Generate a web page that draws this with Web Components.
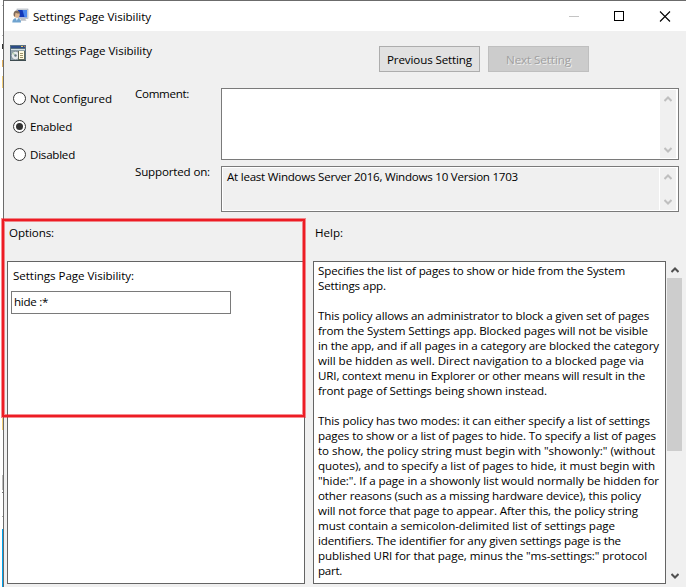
<!DOCTYPE html>
<html lang="en">
<head>
<meta charset="utf-8">
<title>Settings Page Visibility</title>
<style>
html,body{margin:0;height:100%;overflow:hidden;background:#fff}
body{font:11.6px/15px "Open Sans","Noto Sans",sans-serif;color:#000}
</style>
</head>
<body>
<policy-dialog></policy-dialog>
<script>
const define = (name, html, setup) => {
  const t = document.createElement('template');
  t.innerHTML = html;
  customElements.define(name, class extends HTMLElement {
    constructor() {
      super();
      this.attachShadow({mode: 'open'}).append(t.content.cloneNode(true));
    }
    connectedCallback() { if (setup) setup(this, this.shadowRoot); }
  });
};

// A single line of text tracked to a given width.
define('text-line', `<style>
:host{display:block;height:15px;line-height:15px;white-space:pre}
span{display:inline-block}</style><span><slot></slot></span>`, (el, root) => {
  const s = root.querySelector('span'), w = parseFloat(el.getAttribute('w'));
  if (!w) return;
  const n = el.textContent.length;
  s.style.letterSpacing = ((w - s.getBoundingClientRect().width) / n).toFixed(4) + 'px';
});

define('user-monitor-icon', `<style>:host{display:block;width:17px;height:16px}svg{display:block}</style>
<svg width="17" height="16" viewBox="0 0 17 16">
<rect x="5" y="1" width="11" height="9.5" fill="#d9dde2" stroke="#9ea7b3" stroke-width=".6"/>
<rect x="6" y="2" width="9" height="7.2" fill="#1238b8"/><path d="M10.5 2H15v7.2h-2.5z" fill="#4a86ee"/>
<path d="M9 10.5h4l1.500 2.200H8z" fill="#b9bec6"/>
<path d="M.3 14.500c0-3 1.700-4.500 4.200-4.500s4.600 1.500 4.600 4.500z" fill="#6fa3cf"/>
<path d="M3.500 10l1.300 2.700 1.500-2.700z" fill="#eef4fa"/>
<circle cx="4.800" cy="6.700" r="3" fill="#dcb48e"/>
<path d="M1.600 7.500c-.5-3.300 1.200-5 3.300-4.900 2 .1 3 1.300 2.900 2.900-2 .4-3.500-.3-4.200-.8C3.300 6 2.800 8 2.900 9z" fill="#7d6a5c"/>
</svg>`);

define('policy-icon', `<style>:host{display:block;width:16px;height:16px}svg{display:block}</style>
<svg width="16" height="16" viewBox="0 0 16 16" shape-rendering="crispEdges">
<rect width="16" height="16" fill="#587181"/><rect x="1" y="1" width="14" height="2" fill="#2b4b86"/>
<rect x="11" y="1" width="2" height="1" fill="#e8c75d"/><rect x="14" y="1" width="1" height="1" fill="#d46a4a"/>
<rect x="1" y="4" width="14" height="11" fill="#8fa2a9"/><rect x="1" y="4" width="14" height="1" fill="#d4dee2"/>
<g shape-rendering="auto"><circle cx="5.500" cy="10.500" r="4.200" fill="#e6ebed" stroke="#72838b" stroke-width=".7"/>
<path d="M5.500 10.500L2 9 3.600 7z" fill="#b9d4b4"/><circle cx="5.500" cy="10.500" r="1.200" fill="#5f747e"/></g>
<rect x="8" y="6" width="7" height="9" fill="#5d6657"/><rect x="9" y="6" width="5" height="8" fill="#fffbe0"/>
<path d="M10 8h3v1h-3zM10 10h3v1h-3zM10 12h3v1h-3z" fill="#9c936b"/>
<rect y="15" width="16" height="1" fill="#3d4b50"/>
</svg>`);

define('title-bar', `<style>
:host{display:flex;height:30px;background:#fff;padding-left:8px;align-items:center}
user-monitor-icon{margin-right:4px}text-line{flex:1}
svg{display:block;margin-right:15px}
</style><user-monitor-icon></user-monitor-icon><text-line w="118">Settings Page Visibility</text-line>
<svg width="102" height="11" viewBox="0 0 102 11" fill="none">
<path d="M0 5.500h10" stroke="#c4c4c4"/><rect x="45.500" y=".5" width="9" height="9" stroke="#000"/>
<path d="M91 .5l10 10M101 .5l-10 10" stroke="#000" stroke-width="1.100"/></svg>`);

define('push-button', `<style>
:host{display:flex;box-sizing:border-box;width:101px;height:26px;border:1px solid #adadad;background:#e1e1e1;align-items:center;justify-content:center}
:host([disabled]){background:#ccc;border-color:#bfbfbf;color:#a0a0a0;text-shadow:1px 1px #efefef}
</style><slot></slot>`);

define('radio-option', `<style>
:host{display:flex;align-items:center;height:28px;gap:4px}
i{box-sizing:border-box;width:13px;height:13px;border:1px solid #333;border-radius:50%;background:#fff;display:grid;place-items:center}
:host([checked]) i::after{content:"";width:7px;height:7px;border-radius:50%;background:#333}
</style><i></i><slot></slot>`);

define('scroll-arrow', `<style>:host{display:block;width:8px;height:6px;color:#bfbfbf}:host([down]){transform:scaleY(-1)}svg{display:block}</style>
<svg width="8" height="6" viewBox="0 0 8 6"><path d="M.5 5L4 1.500 7.500 5" fill="none" stroke="currentColor" stroke-width="2"/></svg>`);

define('text-area', `<style>
:host{display:flex;box-sizing:border-box;border:1px solid #7a7a7a;background:#fff;padding:1px}
.t{flex:1;padding:1px 4px}
.s{width:16px;background:#f0f0f0;display:flex;flex-direction:column;justify-content:space-between;align-items:center;padding:6px 0 5px;box-sizing:border-box;margin-right:1px}
:host([readonly]) .t{background:#f0f0f0;margin-right:1px}
</style><div class="t"><slot></slot></div><div class="s"><scroll-arrow></scroll-arrow><scroll-arrow down></scroll-arrow></div>`);

define('field-box', `<style>
:host{display:flex;box-sizing:border-box;width:220px;height:23px;border:1px solid #7a7a7a;background:#fff;align-items:center;padding:0 3px 2px 2px}
</style><slot></slot>`);

define('panel-box', `<style>
:host{display:block;box-sizing:border-box;height:323px;border:1px solid #646464;background:#fff}
</style><slot></slot>`);

define('scroll-bar', `<style>
:host{display:flex;flex-direction:column;align-items:center;width:15px;height:323px;margin-left:1px;box-sizing:border-box;padding:6px 0 5px}
scroll-arrow{color:#505050}
div{width:15px;height:173px;background:#cdcdcd;margin:5px 0 auto}
</style><scroll-arrow></scroll-arrow><div></div><scroll-arrow down></scroll-arrow>`);

// Red rectangle drawn over the options area.
define('highlight-frame', `<style>
:host{position:absolute;left:1px;top:218px;width:305px;height:200px;box-sizing:border-box;border:1px solid rgba(237,28,36,.5)}
div{box-sizing:border-box;height:100%;border:2px solid #ed1c24}
div::after{content:"";display:block;box-sizing:border-box;height:100%;border:1px solid rgba(237,28,36,.5)}
</style><div></div>`);

define('desktop-edge', `<style>
:host{display:block;width:3px;background:
linear-gradient(#f5d078,#f5d078) 2px 76px/1px 12px,
linear-gradient(#f5d078,#f5d078) 2px 418px/1px 12px,
linear-gradient(#e3b15c,#e3b15c) 2px 60px/1px 7px,
linear-gradient(#333,#333) 2px 44px/1px 5px,
linear-gradient(#bbb,#bbb) 2px 475px/1px 15px,
linear-gradient(#777,#777) 2px 492px/1px 1px,
linear-gradient(#aaa,#aaa) 2px 516px/1px 1px,
linear-gradient(#bbb,#bbb) 2px 35px/1px 1px,
linear-gradient(#bbb,#bbb) 2px 5px/1px 1px,
linear-gradient(#00a2ed,#00a2ed) 2px 529px/1px 58px,#fff;background-repeat:no-repeat}
</style>`);

define('policy-dialog', `<style>
:host{display:grid;grid-template-columns:3px 683px;width:686px;height:587px;position:relative;overflow:hidden}
.win{border:solid #6b6b6b;border-width:1px 0 0 1px;background:#f0f0f0;box-sizing:border-box}
header{display:flex;height:57px;padding:15px 0 0 6px;box-sizing:border-box;gap:8px}
header policy-icon{margin-top:-1px}
header > text-line{width:337px;margin-top:-3px}
.config{display:grid;grid-template-columns:122px 86px 458px;padding-left:9px;height:124px}
.radios{margin-top:-4px}
.labels{display:grid;align-content:start;grid-auto-rows:78px;margin-top:-2px}
.areas{display:grid;grid-template-rows:72px 46px;gap:6px;align-content:start}
.heads{display:grid;grid-template-columns:306px auto;padding:13px 0 0 5px;height:49px;box-sizing:border-box}
.panels{display:grid;grid-template-columns:306px 353px 16px;padding-left:3px}
.options{width:298px}
.options .in{padding:6px 0 0 5px}
.options field-box{margin:8px 0 0 -2px}
.help .in{padding:1px 4px}
</style>
<desktop-edge></desktop-edge>
<div class="win">
<title-bar></title-bar>
<header><policy-icon></policy-icon><text-line w="118">Settings Page Visibility</text-line>
<push-button><text-line w="85">Previous Setting</text-line></push-button><push-button disabled><text-line w="65">Next Setting</text-line></push-button></header>
<div class="config">
<div class="radios"><radio-option><text-line w="82">Not Configured</text-line></radio-option><radio-option checked><text-line w="42">Enabled</text-line></radio-option><radio-option><text-line w="45">Disabled</text-line></radio-option></div>
<div class="labels"><text-line w="54">Comment:</text-line><text-line w="75">Supported on:</text-line></div>
<div class="areas"><text-area></text-area><text-area readonly><text-line w="291">At least Windows Server 2016, Windows 10 Version 1703</text-line></text-area></div>
</div>
<div class="heads"><text-line w="45">Options:</text-line><text-line w="28">Help:</text-line></div>
<div class="panels">
<panel-box class="options"><div class="in"><text-line w="121">Settings Page Visibility:</text-line><field-box><text-line w="34">hide :*</text-line></field-box></div></panel-box>
<panel-box class="help"><div class="in">
<text-line w="307">Specifies the list of pages to show or hide from the System</text-line>
<text-line w="68">Settings app.</text-line>
<text-line></text-line>
<text-line w="331">This policy allows an administrator to block a given set of pages</text-line>
<text-line w="330">from the System Settings app. Blocked pages will not be visible</text-line>
<text-line w="341">in the app, and if all pages in a category are blocked the category</text-line>
<text-line w="326">will be hidden as well. Direct navigation to a blocked page via</text-line>
<text-line w="327">URI, context menu in Explorer or other means will result in the</text-line>
<text-line w="229">front page of Settings being shown instead.</text-line>
<text-line></text-line>
<text-line w="332">This policy has two modes: it can either specify a list of settings</text-line>
<text-line w="338">pages to show or a list of pages to hide. To specify a list of pages</text-line>
<text-line w="337">to show, the policy string must begin with "showonly:" (without</text-line>
<text-line w="337">quotes), and to specify a list of pages to hide, it must begin with</text-line>
<text-line w="341">"hide:". If a page in a showonly list would normally be hidden for</text-line>
<text-line w="323">other reasons (such as a missing hardware device), this policy</text-line>
<text-line w="320">will not force that page to appear. After this, the policy string</text-line>
<text-line w="297">must contain a semicolon-delimited list of settings page</text-line>
<text-line w="303">identifiers. The identifier for any given settings page is the</text-line>
<text-line w="329">published URI for that page, minus the "ms-settings:" protocol</text-line>
<text-line w="24">part.</text-line>
</div></panel-box>
<scroll-bar></scroll-bar>
</div>
</div>
<highlight-frame></highlight-frame>`);
</script>
</body>
</html>
